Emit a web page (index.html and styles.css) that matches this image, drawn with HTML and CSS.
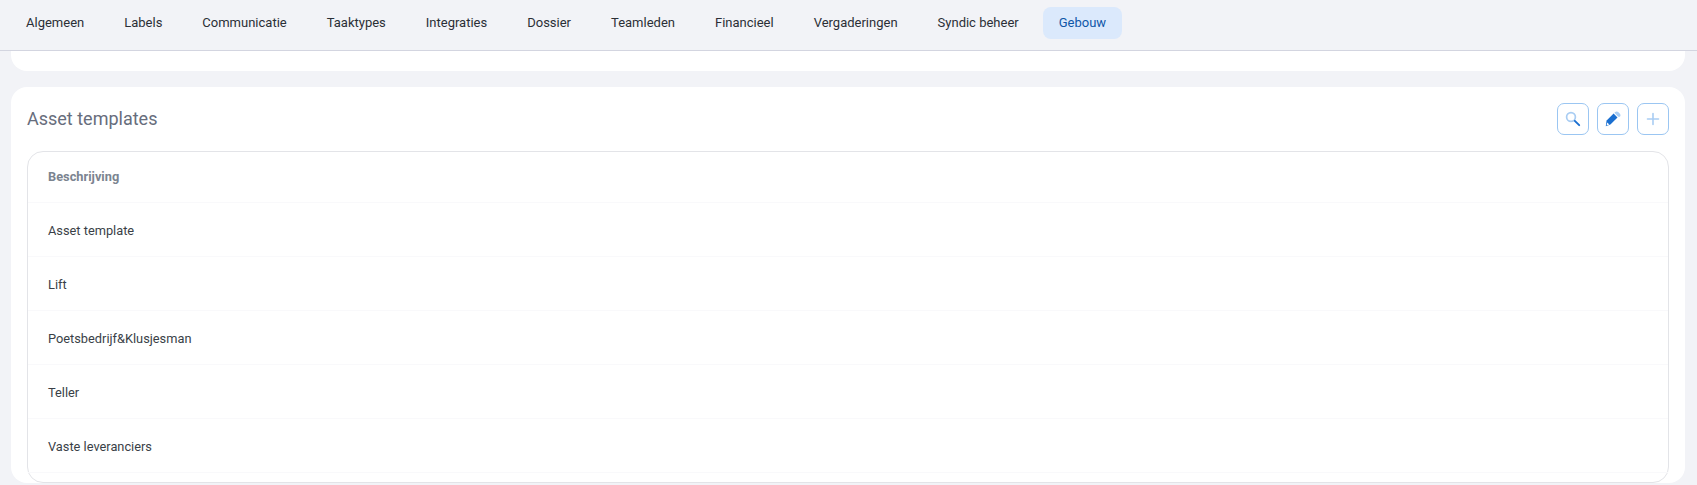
FILE: index.html
```html
<!DOCTYPE html>
<html lang="en">
<head>
    <meta charset="UTF-8">
    <title>Asset templates</title>
    <link rel="stylesheet" href="styles.css">
</head>
<body>
    <div class="tabs">
        <a class="tab">Algemeen</a>
        <a class="tab">Labels</a>
        <a class="tab">Communicatie</a>
        <a class="tab">Taaktypes</a>
        <a class="tab">Integraties</a>
        <a class="tab">Dossier</a>
        <a class="tab">Teamleden</a>
        <a class="tab">Financieel</a>
        <a class="tab">Vergaderingen</a>
        <a class="tab">Syndic beheer</a>
        <a class="tab active">Gebouw</a>
    </div>

    <div class="content">
        <div class="card card-stub"></div>

        <div class="card">
            <div class="card-header">
                <h2>Asset templates</h2>
                <div class="actions">
                    <button type="button" class="icon-btn">
                        <svg width="16" height="16" viewBox="0 0 16 16">
                            <circle cx="6" cy="6" r="4.4" fill="none" stroke="#a9cdf3" stroke-width="1.7"/>
                            <path d="M9.8 9.8 L14.2 14.2" stroke="#1a6fd0" stroke-width="1.9" stroke-linecap="round"/>
                        </svg>
                    </button>
                    <button type="button" class="icon-btn">
                        <svg width="16" height="16" viewBox="0 0 16 16">
                            <path d="M8.6 2.6 L12.5 6.5 L5.4 13.5 L.8 15.2 L1.6 9.6 Z" fill="#1a6fd0"/>
                            <path d="M9.4 1.8 L10.2 1 C11 .2 12.4 .2 13.2 1 L14.9 2.7 C15.7 3.5 15.7 4.9 14.9 5.7 L13.2 5.7 Z" fill="#a9cdf3"/>
                            <path d="M2.2 11.4 L4.4 13.6 L1.6 14.4 Z" fill="#ffffff"/>
                        </svg>
                    </button>
                    <button type="button" class="icon-btn">
                        <svg width="16" height="16" viewBox="0 0 16 16">
                            <path d="M8 2.5 V13.5 M2.5 8 H13.5" stroke="#a9cdf3" stroke-width="1.6" stroke-linecap="round"/>
                        </svg>
                    </button>
                </div>
            </div>

            <div class="table-frame">
                <div class="row row-head">Beschrijving</div>
                <div class="row">Asset template</div>
                <div class="row">Lift</div>
                <div class="row">Poetsbedrijf&amp;Klusjesman</div>
                <div class="row">Teller</div>
                <div class="row">Vaste leveranciers</div>
            </div>
        </div>
    </div>
</body>
</html>
```

FILE: styles.css
```css
* {
    box-sizing: border-box;
}
html, body {
    height: 100%;
}
body {
    font-family: Roboto, Arial, sans-serif;
    font-size: 13px;
    background-color: #f2f3f7;
    margin: 0;
    color: #3a3f47;
    overflow: hidden;
}
.tabs {
    display: flex;
    gap: 8px;
    align-items: flex-start;
    height: 51px;
    padding: 7px 10px 0;
    border-bottom: 1px solid #d3d5e0;
}
.tab {
    height: 32px;
    line-height: 32px;
    padding: 0 16px;
    border-radius: 8px;
    color: #2b2f36;
    white-space: nowrap;
}
.tab.active {
    background-color: #dbe9fc;
    color: #0f57a8;
}
.content {
    padding: 0 12px 0 11px;
}
.card {
    background-color: white;
    border-radius: 16px;
    margin-bottom: 16px;
    padding: 16px 16px 0;
}
.card-stub {
    height: 20px;
    padding: 0;
    border-radius: 0 0 16px 16px;
}
.card-header {
    display: flex;
    justify-content: space-between;
    align-items: center;
    height: 32px;
    margin-bottom: 16px;
}
h2 {
    margin: 0 0 2px;
    font-size: 18px;
    font-weight: 400;
    color: #676d7c;
}
.actions {
    display: flex;
    gap: 8px;
}
.icon-btn {
    display: flex;
    align-items: center;
    justify-content: center;
    width: 32px;
    height: 32px;
    padding: 0;
    background-color: white;
    border: 1px solid #9bc6f2;
    border-radius: 7px;
}
.table-frame {
    border: 1px solid #e3e4e8;
    border-radius: 16px;
    padding-bottom: 9px;
}
.row {
    display: flex;
    align-items: center;
    height: 54px;
    padding: 2px 20px 0;
    font-size: 12.8px;
    border-bottom: 1px solid #f9f9fb;
}
.row-head {
    height: 51px;
    padding: 0 20px 2px;
    font-weight: 700;
    color: #7b8490;
}
```
